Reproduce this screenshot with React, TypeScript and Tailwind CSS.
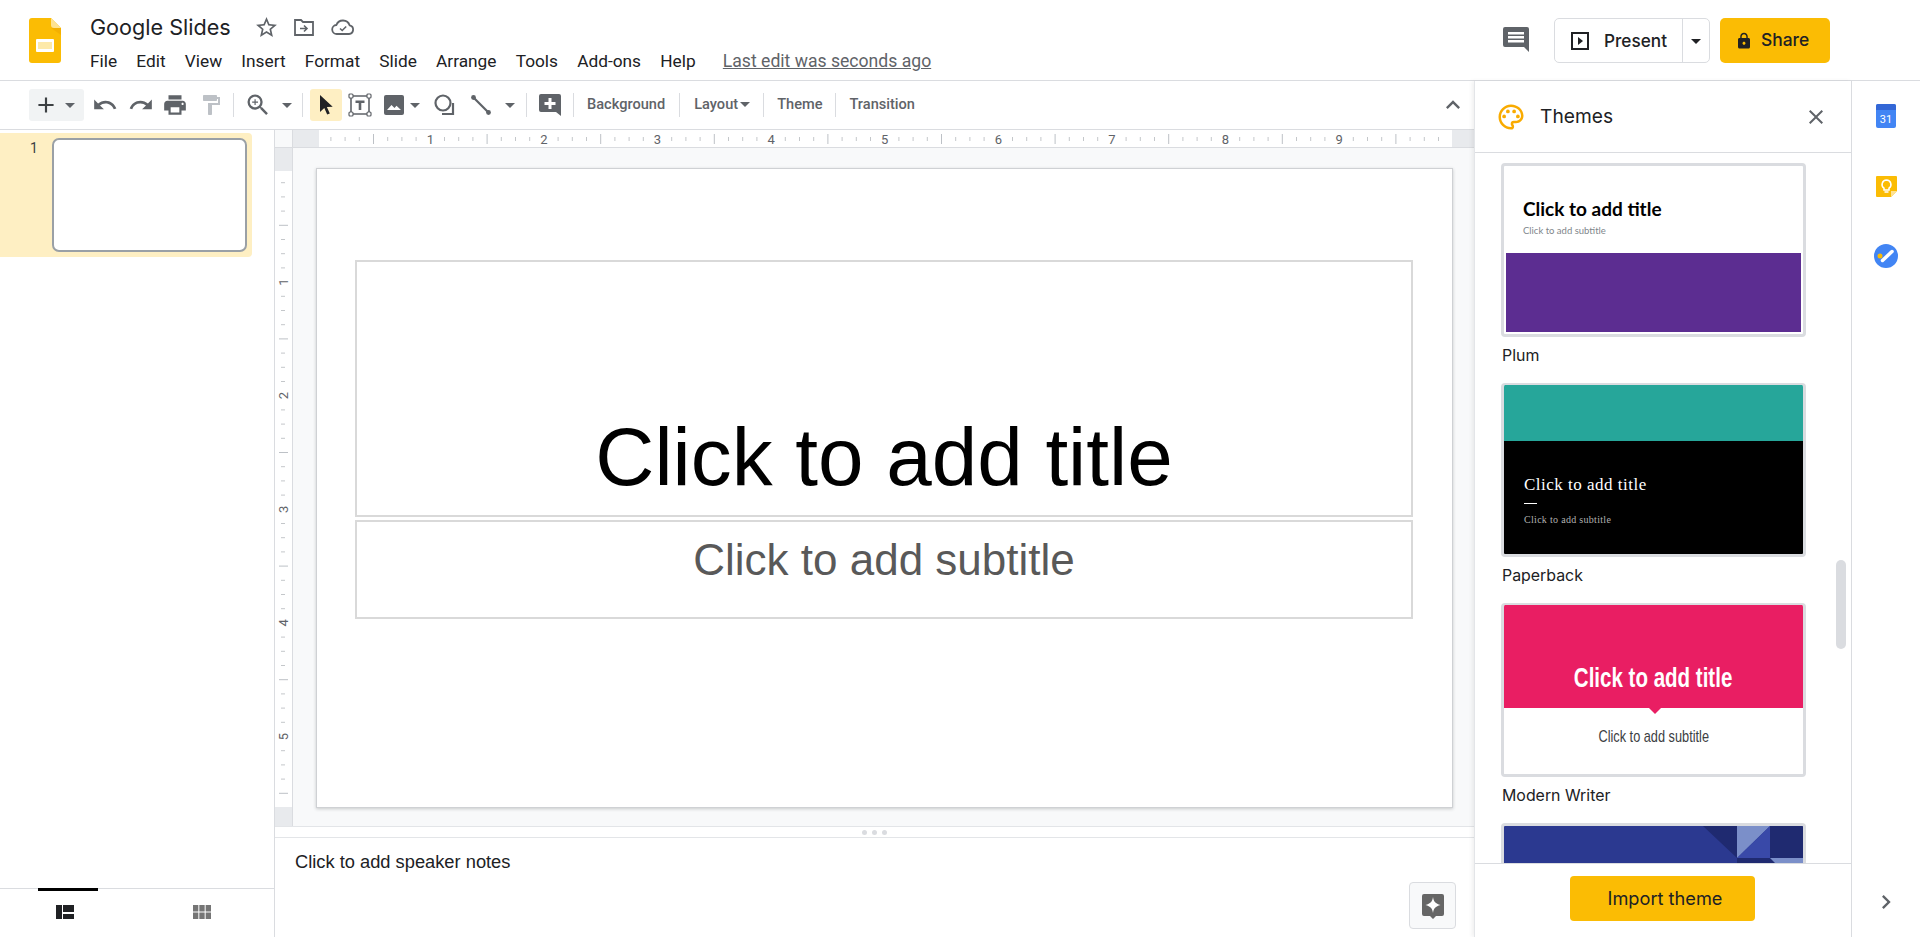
import {
  MdAdd,
  MdArrowDropDown,
  MdChevronRight,
  MdClose,
  MdFormatPaint,
  MdKeyboardArrowUp,
  MdLock,
  MdOutlinePalette,
  MdPrint,
  MdRedo,
  MdStarBorder,
  MdUndo,
  MdViewModule,
  MdZoomIn,
} from "react-icons/md";

const menus = ["File", "Edit", "View", "Insert", "Format", "Slide", "Arrange", "Tools", "Add-ons", "Help"];

function SlidesLogo() {
  return (
    <svg width="32" height="45" viewBox="0 0 32 45" className="shrink-0">
      <path d="M3 0h19l10 10v32a3 3 0 0 1-3 3H3a3 3 0 0 1-3-3V3a3 3 0 0 1 3-3z" fill="#fbbc04" />
      <path d="M22 0l10 10h-7a3 3 0 0 1-3-3z" fill="#fde293" />
      <path d="M22 10h10v7z" fill="#f0a800" opacity="0.6" />
      <path d="M8 21h16a1 1 0 0 1 1 1v11a1 1 0 0 1-1 1H8a1 1 0 0 1-1-1V22a1 1 0 0 1 1-1zm1 3v7h14v-7z" fill="#fff" />
      <rect x="9" y="24" width="14" height="7" fill="#fde9a8" />
    </svg>
  );
}

function Sep({ ml }: { ml: string }) {
  return <div className={`w-px h-[24px] bg-[#dadce0] shrink-0 ${ml}`} />;
}

function Caret({ className }: { className: string }) {
  return <MdArrowDropDown size={24} className={`shrink-0 text-[#5f6368] ${className}`} />;
}

function TextBtn({ label, className }: { label: string; className: string }) {
  return <span className={`font-['Roboto',sans-serif] font-medium text-[14.6px] text-[#5f6368] shrink-0 ${className}`}>{label}</span>;
}

function Toolbar() {
  return (
    <div className="h-[49px] border-b border-[#dadce0] flex items-center pl-[29px] shrink-0">
      <div className="w-[55px] h-[32px] bg-[#f1f3f4] rounded-[3px] flex items-center shrink-0">
        <MdAdd size={26} className="text-[#3c4043] ml-[4px]" />
        <MdArrowDropDown size={24} className="text-[#5f6368] -ml-[1px]" />
      </div>
      <MdUndo size={26} className="text-[#5f6368] ml-[8px] shrink-0" />
      <MdRedo size={26} className="text-[#5f6368] ml-[10px] shrink-0" />
      <MdPrint size={26} className="text-[#5f6368] ml-[8px] shrink-0" />
      <MdFormatPaint size={24} className="text-[#bdc1c6] ml-[11px] shrink-0" />
      <Sep ml="ml-[10px]" />
      <MdZoomIn size={28} className="text-[#5f6368] ml-[10px] shrink-0" />
      <Caret className="ml-[3px]" />
      <Sep ml="ml-[3px]" />
      <div className="w-[32px] h-[32px] bg-[#feefc3] rounded-[3px] ml-[7px] flex items-center justify-center shrink-0">
        <svg width="18" height="22" viewBox="0 0 18 22">
          <path d="M3 1l0 17 4.3-4 2.9 6.6 2.6-1.1-2.9-6.4 5.8-.4z" fill="#202124" />
        </svg>
      </div>
      <svg width="24" height="24" viewBox="0 0 24 24" className="ml-[6px] shrink-0">
        <path d="M3 3h18v18H3z" fill="none" stroke="#5f6368" strokeWidth="1.6" />
        <g fill="#fff" stroke="#5f6368" strokeWidth="1.2">
          <rect x="1" y="1" width="4" height="4" rx="1" />
          <rect x="19" y="1" width="4" height="4" rx="1" />
          <rect x="1" y="19" width="4" height="4" rx="1" />
          <rect x="19" y="19" width="4" height="4" rx="1" />
        </g>
        <path d="M7.5 7.5h9v2.4h-3.2v7h-2.6v-7H7.5z" fill="#5f6368" />
      </svg>
      <svg width="20" height="20" viewBox="0 0 20 20" className="ml-[12px] shrink-0">
        <path d="M2 0h16a2 2 0 0 1 2 2v16a2 2 0 0 1-2 2H2a2 2 0 0 1-2-2V2a2 2 0 0 1 2-2z" fill="#5f6368" />
        <path d="M3 15l4.5-5 3 3 2-2.2L17 15z" fill="#fff" />
      </svg>
      <Caret className="ml-[-1px]" />
      <svg width="24" height="24" viewBox="0 0 24 24" className="ml-[6px] shrink-0">
        <circle cx="10" cy="10" r="7.5" fill="none" stroke="#5f6368" strokeWidth="2.2" />
        <path d="M20 10v11H9" fill="none" stroke="#5f6368" strokeWidth="2.2" />
      </svg>
      <svg width="24" height="24" viewBox="0 0 24 24" className="ml-[12px] shrink-0">
        <path d="M4.5 4.5l15 15" stroke="#5f6368" strokeWidth="2.2" />
        <circle cx="4.5" cy="4.5" r="2.4" fill="#5f6368" />
        <circle cx="19.5" cy="19.5" r="2.4" fill="#5f6368" />
      </svg>
      <Caret className="ml-[5px]" />
      <Sep ml="ml-[4px]" />
      <svg width="22" height="24" viewBox="0 0 22 24" className="ml-[12px] shrink-0">
        <path d="M2 1h18a2 2 0 0 1 2 2v20l-5-4H2a2 2 0 0 1-2-2V3a2 2 0 0 1 2-2z" fill="#5f6368" />
        <path d="M9.5 5h3v4h4v3h-4v4h-3v-4h-4V9h4z" fill="#fff" />
      </svg>
      <Sep ml="ml-[12px]" />
      <TextBtn label="Background" className="ml-[13px]" />
      <Sep ml="ml-[14px]" />
      <span className="flex items-center ml-[14px] shrink-0">
        <TextBtn label="Layout" className="" />
        <svg width="10" height="5" viewBox="0 0 10 5" className="ml-[2px]">
          <path d="M0 0h10L5 5z" fill="#5f6368" />
        </svg>
      </span>
      <Sep ml="ml-[13px]" />
      <TextBtn label="Theme" className="ml-[13px]" />
      <Sep ml="ml-[13px]" />
      <TextBtn label="Transition" className="ml-[13px]" />
      <MdKeyboardArrowUp size={28} className="text-[#5f6368] ml-auto mr-[7px] shrink-0" />
    </div>
  );
}

function HRuler() {
  const marks = [];
  for (let i = 1; i < 80; i++) {
    const x = i * 14.2 - 2.3;
    if (x > 1133) break;
    if (i % 8 === 0) continue;
    const half = i % 4 === 0;
    marks.push(<path key={i} d={`M${x} ${half ? 4 : 7}V${half ? 14 : 11}`} stroke={half ? "#bdc1c6" : "#c4c7ca"} strokeWidth="1" />);
  }
  return (
    <svg width="1133" height="17" viewBox="0 0 1133 17" className="shrink-0">
      {marks}
      {[1, 2, 3, 4, 5, 6, 7, 8, 9].map((n) => (
        <text key={n} x={n * 113.6 - 2.3} y="14" textAnchor="middle" fontSize="13" fill="#5f6368" fontFamily="Roboto, sans-serif">
          {n}
        </text>
      ))}
    </svg>
  );
}

function VRuler() {
  const marks = [];
  for (let i = 1; i < 48; i++) {
    const y = i * 14.2 - 2.5;
    if (y > 636) break;
    if (i % 8 === 0) continue;
    const half = i % 4 === 0;
    marks.push(<path key={i} d={`M${half ? 4 : 6} ${y}H${half ? 13 : 10}`} stroke={half ? "#bdc1c6" : "#c4c7ca"} strokeWidth="1" />);
  }
  return (
    <svg width="17" height="636" viewBox="0 0 17 636" className="shrink-0">
      {marks}
      {[1, 2, 3, 4, 5].map((n) => {
        const y = n * 113.6 - 2.5;
        return (
          <text key={n} x="9" y={y} transform={`rotate(-90 9 ${y})`} dy="4" textAnchor="middle" fontSize="13" fill="#5f6368" fontFamily="Roboto, sans-serif">
            {n}
          </text>
        );
      })}
    </svg>
  );
}

function FilmStrip() {
  return (
    <div className="w-[275px] border-r border-[#dadce0] flex flex-col shrink-0">
      <div className="flex-1 pt-[3px]">
        <div className="w-[252px] h-[124px] bg-[#feefc3] rounded-r-[4px] flex pt-[5px] pl-[52px] relative">
          <span className="absolute left-[30px] top-[5px] font-['Roboto',sans-serif] text-[14px] text-[#3c4043]">1</span>
          <div className="w-[195px] h-[114px] bg-white border-2 border-[#9aa0a6] rounded-[7px]" />
        </div>
      </div>
      <div className="h-[49px] border-t border-[#dadce0] relative flex items-start shrink-0">
        <div className="absolute left-[38px] -top-px w-[60px] h-[3px] bg-black" />
        <div className="w-[132px] flex justify-center pt-[15px]">
          <svg width="18" height="16" viewBox="0 0 18 16">
            <path d="M0 1h6v14H0zM7 1h11v7H7zM7 10h11v5H7z" fill="#202124" />
          </svg>
        </div>
        <div className="w-[145px] flex justify-center pt-[11px]">
          <MdViewModule size={24} className="text-[#757575]" />
        </div>
      </div>
    </div>
  );
}

function SlideCanvas() {
  return (
    <div className="flex h-[678px] shrink-0">
      <div className="w-[18px] border-r border-[#dadce0] flex flex-col shrink-0">
        <div className="h-[23px] bg-[#e8eaed] shrink-0" />
        <VRuler />
        <div className="flex-1 bg-[#e8eaed]" />
      </div>
      <div className="flex-1 bg-[#f8f9fa] pl-[23px] pt-[20px]">
        <div className="w-[1137px] h-[640px] bg-white border border-[#cfd1d4] shadow-[0_1px_3px_rgba(60,64,67,0.25)] pt-[91px] pl-[38px] font-['Liberation_Sans',sans-serif]">
          <div className="w-[1058px] h-[257px] border-2 border-[#d9d9d9] flex items-end justify-center pb-[13px]">
            <span className="text-[81.8px] leading-[90px] text-black">Click to add title</span>
          </div>
          <div className="w-[1058px] h-[99px] mt-[3px] border-2 border-[#d9d9d9] flex justify-center pt-[13px]">
            <span className="text-[44px] leading-[50px] text-[#595959]">Click to add subtitle</span>
          </div>
        </div>
      </div>
    </div>
  );
}

function Notes() {
  return (
    <>
      <div className="h-[12px] border-y border-[#e3e5e8] flex items-center justify-center gap-[5px] shrink-0">
        <span className="w-[5px] h-[5px] rounded-full bg-[#dadce0]" />
        <span className="w-[5px] h-[5px] rounded-full bg-[#dadce0]" />
        <span className="w-[5px] h-[5px] rounded-full bg-[#dadce0]" />
      </div>
      <div className="flex-1 flex justify-between pl-[20px] pr-[18px]">
        <span className="font-['Liberation_Sans',sans-serif] text-[18.3px] leading-[22px] text-[#202124] pt-[13px]">Click to add speaker notes</span>
        <div className="w-[47px] h-[47px] mt-[44px] bg-[#f8f9fa] border border-[#dadce0] rounded-[4px] flex items-center justify-center">
          <svg width="24" height="26" viewBox="0 0 24 26">
            <path d="M3 1h18a2 2 0 0 1 2 2v18a2 2 0 0 1-2 2h-6l-3 3-3-3H3a2 2 0 0 1-2-2V3a2 2 0 0 1 2-2z" fill="#666" />
            <path d="M12 4c.6 4.5 2.5 6.6 7.5 8-5 1.4-6.9 3.5-7.5 8-.6-4.5-2.5-6.6-7.5-8 5-1.4 6.9-3.5 7.5-8z" fill="#fff" />
          </svg>
        </div>
      </div>
    </>
  );
}

function ThemeLabel({ name }: { name: string }) {
  return <div className="h-[46px] pt-[9px] pl-px font-['Inter',sans-serif] text-[15.9px] leading-[20px] text-[#202124]">{name}</div>;
}

function ThemeList() {
  return (
    <div className="flex-1 overflow-hidden relative pl-[26px] pt-[10px]">
      <div className="w-[305px] h-[174px] border-[3px] border-[#dadce0] rounded-[4px] bg-white overflow-hidden">
        <div className="h-[87px] pl-[19px] pt-[32px]">
          <div className="font-['Lato',sans-serif] font-bold text-[19px] leading-[22px] text-black">Click to add title</div>
          <div className="font-['Lato',sans-serif] text-[9.5px] leading-[12px] mt-[5px] text-[#80868b]">Click to add subtitle</div>
        </div>
        <div className="mx-[2px] h-[79px] bg-[#5c2d91]" />
      </div>
      <ThemeLabel name="Plum" />

      <div className="w-[305px] h-[174px] border-x-[3px] border-t-2 border-b-[3px] border-[#dadce0] rounded-[4px] overflow-hidden flex flex-col">
        <div className="h-[56px] bg-[#26a69a] shrink-0" />
        <div className="flex-1 bg-black pl-[20px] pt-[33px] font-['Liberation_Serif',serif]">
          <div className="text-[17px] leading-[22px] text-white tracking-[0.5px]">Click to add title</div>
          <div className="w-[13px] h-px bg-white mt-[7px]" />
          <div className="text-[10px] leading-[12px] mt-[10px] text-[#b0b0b0] tracking-[0.3px]">Click to add subtitle</div>
        </div>
      </div>
      <ThemeLabel name="Paperback" />

      <div className="w-[305px] h-[174px] border-x-[3px] border-t-2 border-b-[3px] border-[#dadce0] rounded-[4px] overflow-hidden flex flex-col relative">
        <div className="h-[103px] bg-[#e91e63] flex justify-center items-end pb-[16px] shrink-0">
          <span className="inline-block scale-x-[0.72] font-['Liberation_Sans',sans-serif] font-bold text-[28.5px] leading-[30px] text-white whitespace-nowrap">Click to add title</span>
        </div>
        <div className="absolute left-[145px] top-[103px] w-0 h-0 border-x-[6px] border-x-transparent border-t-[6px] border-t-[#e91e63]" />
        <div className="flex-1 bg-white flex justify-center pt-[20px]">
          <span className="inline-block scale-x-[0.75] font-['Liberation_Sans',sans-serif] text-[17px] leading-[18px] text-[#3c4043] whitespace-nowrap">Click to add subtitle</span>
        </div>
      </div>
      <ThemeLabel name="Modern Writer" />

      <div className="w-[305px] h-[174px] border-x-[3px] border-t-[3px] border-[#dadce0] rounded-[4px] overflow-hidden bg-[#2b3990]">
        <svg width="300" height="60" viewBox="0 0 300 60">
          <path d="M199 0h34v32z" fill="#1f2a70" />
          <path d="M233 0h33L233 32z" fill="#7b8fc9" />
          <path d="M266 0v32h-33z" fill="#3949a8" />
          <path d="M266 0h34v32h-34z" fill="#1f2a70" />
          <path d="M233 32h36l10 10h-46z" fill="#1f2a70" />
          <path d="M266 32h34v10h-24z" fill="#7b8fc9" />
        </svg>
      </div>
      <div className="absolute right-[5px] top-[407px] w-[10px] h-[89px] bg-[#dadce0] rounded-full" />
    </div>
  );
}

function ThemesPanel() {
  return (
    <div className="w-[377px] border-l border-[#e3e5e8] flex flex-col shrink-0 shadow-[-2px_0_4px_rgba(60,64,67,0.08)]">
      <div className="h-[72px] border-b border-[#dadce0] flex items-center pl-[21px] pr-[23px] shrink-0">
        <MdOutlinePalette size={30} className="text-[#f9ab00] shrink-0" />
        <span className="font-['Inter',sans-serif] text-[19.2px] text-[#202124] ml-[14px]">Themes</span>
        <MdClose size={24} className="text-[#5f6368] ml-auto" />
      </div>
      <ThemeList />
      <div className="h-[74px] border-t border-[#dadce0] flex justify-center pt-[12px] pr-[2px] shrink-0">
        <div className="w-[185px] h-[45px] bg-[#fbbc04] rounded-[4px] flex items-center justify-center pl-[6px] font-['Inter',sans-serif] text-[18.2px] text-[#202124]">
          Import theme
        </div>
      </div>
    </div>
  );
}

function SideBar() {
  return (
    <div className="w-[69px] border-l border-[#dadce0] flex flex-col items-center shrink-0">
      <div className="h-[70px] flex items-center justify-center">
        <div className="w-[20px] h-[24px] rounded-[2px] bg-[#4285f4] relative flex items-end justify-center overflow-hidden">
          <div className="absolute top-0 left-0 w-full h-[6px] bg-[#3367d6]" />
          <span className="font-['Roboto',sans-serif] text-[11px] leading-[16px] text-white">31</span>
        </div>
      </div>
      <div className="h-[70px] flex items-center justify-center">
        <svg width="21" height="21" viewBox="0 0 21 21">
          <path d="M1 0h19a1 1 0 0 1 1 1v14l-6 6H1a1 1 0 0 1-1-1V1a1 1 0 0 1 1-1z" fill="#fbbc04" />
          <path d="M21 15l-6 6v-6z" fill="#fde293" />
          <path d="M10.5 4a4.5 4.5 0 0 0-2.5 8.2V14h5v-1.800A4.5 4.5 0 0 0 10.500 4z" fill="none" stroke="#fff" strokeWidth="1.5" />
          <path d="M8.5 16h4" stroke="#fff" strokeWidth="1.5" />
        </svg>
      </div>
      <div className="h-[70px] flex items-center justify-center">
        <svg width="24" height="24" viewBox="0 0 24 24">
          <circle cx="12" cy="12" r="12" fill="#4285f4" />
          <path d="M8.5 16.5L18 7.5" stroke="#fff" strokeWidth="3.5" strokeLinecap="round" />
          <circle cx="6" cy="12" r="2.5" fill="#fbbc04" />
        </svg>
      </div>
      <MdChevronRight size={28} className="text-[#5f6368] mt-auto mb-[21px]" />
    </div>
  );
}

export default function App() {
  return (
    <div className="w-[1920px] h-[937px] bg-white flex flex-col overflow-hidden">
      {/* Header */}
      <header className="h-[81px] border-b border-[#dadce0] flex items-start pl-[29px] pr-[90px] shrink-0">
        <div className="pt-[18px] shrink-0">
          <SlidesLogo />
        </div>
        <div className="ml-[29px] pt-[13px]">
          <div className="flex items-center h-[28px]">
            <span className="font-['Inter',sans-serif] text-[21.6px] leading-[28px] text-[#202124]">Google Slides</span>
            <MdStarBorder size={25} className="text-[#5f6368] ml-[23px]" />
            <svg width="22" height="22" viewBox="0 0 22 22" className="ml-[14px]">
              <path d="M2 4h6l2 2h10v13H2z" fill="none" stroke="#5f6368" strokeWidth="1.8" />
              <path d="M7 12.5h6M11 9.5l3 3-3 3" fill="none" stroke="#5f6368" strokeWidth="1.6" />
            </svg>
            <svg width="24" height="20" viewBox="0 0 24 20" className="ml-[16px]">
              <path d="M6 17a4.5 4.5 0 0 1-.6-9A7 7 0 0 1 18.6 8.3 4.4 4.4 0 0 1 18 17z" fill="none" stroke="#5f6368" strokeWidth="1.8" />
              <path d="M9 11.5l2.2 2 4-4" fill="none" stroke="#5f6368" strokeWidth="1.6" />
            </svg>
          </div>
          <div className="flex items-center mt-[8px] font-['Roboto',sans-serif] text-[17.3px] leading-[24px] text-[#202124] gap-[19.2px]">
            {menus.map((m) => (
              <span key={m}>{m}</span>
            ))}
            <span className="underline text-[#5f6368] ml-[8px] text-[17.6px]">Last edit was seconds ago</span>
          </div>
        </div>
        <div className="ml-auto flex items-start pt-[18px]">
          <svg width="26" height="25" viewBox="0 0 26 25" className="mt-[9px] mr-[25px] shrink-0">
            <path d="M2 0h22a2 2 0 0 1 2 2v23l-5-5H2a2 2 0 0 1-2-2V2a2 2 0 0 1 2-2z" fill="#5f6368" />
            <path d="M5 5h16v2.5H5zM5 9h16v2.5H5zM5 13h16v2.5H5z" fill="#fff" />
          </svg>
          <div className="w-[156px] h-[45px] border border-[#dadce0] rounded-[5px] flex items-center shrink-0">
            <div className="flex-1 h-full flex items-center pl-[16px] border-r border-[#dadce0]">
              <svg width="18" height="18" viewBox="0 0 18 18">
                <path d="M1 1h16v16H1z" fill="none" stroke="#202124" strokeWidth="2" />
                <path d="M7 5l5 4-5 4z" fill="#202124" />
              </svg>
              <span className="font-['Inter',sans-serif] font-medium text-[17.2px] text-[#202124] ml-[15px]">Present</span>
            </div>
            <MdArrowDropDown size={24} className="text-[#202124] mx-px" />
          </div>
          <div className="w-[110px] h-[45px] ml-[10px] bg-[#fbbc04] rounded-[5px] flex items-center pl-[15px] shrink-0">
            <MdLock size={18} className="text-[#202124]" />
            <span className="font-['Inter',sans-serif] font-medium text-[17.4px] text-[#202124] ml-[8px]">Share</span>
          </div>
        </div>
      </header>

      <div className="flex flex-1 min-h-0">
        <div className="w-[1474px] flex flex-col shrink-0">
          <Toolbar />
          <div className="flex flex-1 min-h-0">
            <FilmStrip />
            <div className="flex-1 flex flex-col">
              {/* Ruler */}
              <div className="h-[18px] flex border-b border-[#dadce0] shrink-0">
                <div className="w-[18px] border-r border-[#dadce0] bg-[#f8f9fa]" />
                <div className="w-[26px] bg-[#e8eaed]" />
                <HRuler />
                <div className="flex-1 bg-[#e8eaed]" />
              </div>
              <SlideCanvas />
              <Notes />
            </div>
          </div>
        </div>
        <ThemesPanel />
        <SideBar />
      </div>
    </div>
  );
}
